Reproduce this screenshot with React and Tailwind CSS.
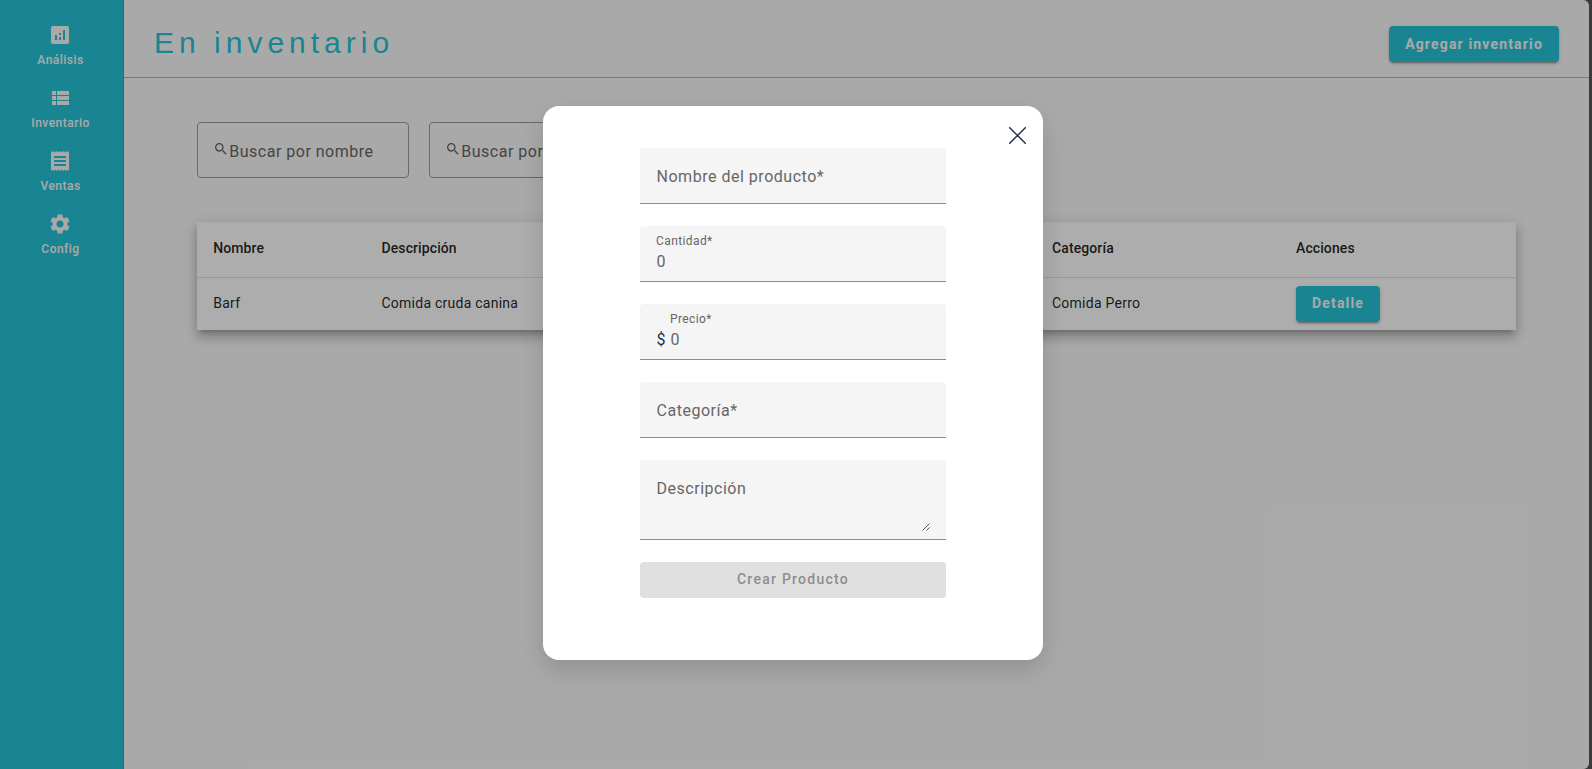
import { MdAnalytics, MdReceipt, MdSettings, MdSearch } from "react-icons/md";

function ViewListIcon({ className }) {
  return (
    <svg className={className} viewBox="0 0 24 24" fill="currentColor">
      <path d="M4 14h4v-4H4v4zm0 5h4v-4H4v4zM4 9h4V5H4v4zm5 5h12v-4H9v4zm0 5h12v-4H9v4zM9 5v4h12V5H9z" />
    </svg>
  );
}

const navItems = [
  { label: "Análisis", Icon: MdAnalytics },
  { label: "Inventario", Icon: ViewListIcon },
  { label: "Ventas", Icon: MdReceipt },
  { label: "Config", Icon: MdSettings },
];

function Sidebar() {
  return (
    <nav className="flex w-[124px] shrink-0 flex-col border-r border-[#20adbd] bg-[#27c5d7] pt-[23px] pr-[4px] text-[#fafafa]">
      {navItems.map(({ label, Icon }) => (
        <a key={label} className="flex h-[63px] flex-col items-center">
          <Icon className="size-6" />
          <span className="mt-[3px] pl-[2px] text-[12px] leading-5 font-medium tracking-[0.48px]">{label}</span>
        </a>
      ))}
    </nav>
  );
}

function RaisedButton({ children }) {
  return (
    <button className="h-9 rounded-[4px] bg-[#27c5d7] px-4 text-[14px] font-bold tracking-[1.16px] text-[#fafafa] shadow-[0_3px_1px_-2px_rgba(0,0,0,0.2),0_2px_2px_0_rgba(0,0,0,0.14),0_1px_5px_0_rgba(0,0,0,0.12)]">
      {children}
    </button>
  );
}

function SearchField({ label }) {
  return (
    <div className="flex h-14 w-[212px] items-center rounded-[4px] border border-[#9a9a9a] pl-[15.25px] text-[#666]">
      <MdSearch className="-mt-[3px] size-4" />
      <span className="mt-[3px] text-[16px] tracking-[0.5px] whitespace-nowrap">{label}</span>
    </div>
  );
}

const columns = "grid grid-cols-[168.25px_670.5px_244px_1fr] items-center pl-[16.25px]";

function InventoryTable() {
  return (
    <div className="bg-white text-[14px] text-[rgba(0,0,0,0.87)] shadow-[0_5px_5px_-3px_rgba(0,0,0,0.2),0_8px_10px_1px_rgba(0,0,0,0.14),0_3px_14px_2px_rgba(0,0,0,0.12)]">
      <div className={`${columns} h-14 border-b border-black/12 pb-[3px] font-medium tracking-[0.1px]`}>
        <span>Nombre</span>
        <span>Descripción</span>
        <span>Categoría</span>
        <span>Acciones</span>
      </div>
      <div className={`${columns} h-[52px] tracking-[0.25px]`}>
        <span className="pb-[2px]">Barf</span>
        <span className="pb-[2px]">Comida cruda canina</span>
        <span className="pb-[2px]">Comida Perro</span>
        <div className="flex">
          <RaisedButton>
            <span className="block pb-[2px]">Detalle</span>
          </RaisedButton>
        </div>
      </div>
    </div>
  );
}

function Field({ label, value, prefix, tall }) {
  return (
    <div
      className={`relative flex w-full rounded-t-[4px] border-b border-[#8c8c8c] bg-[#f5f5f5] px-4 text-[16px] leading-6 tracking-[0.52px] text-[#666] ${tall ? "h-20" : "h-14"}`}
    >
      {value === undefined ? (
        <span className="mt-[17px] ml-[0.5px]">{label}</span>
      ) : (
        <>
          {prefix && <span className="mt-[24px] w-[14px] pl-[0.5px] text-[#27304a]">{prefix}</span>}
          <div className="flex flex-col">
            <span className="mt-[6px] text-[12px] leading-[18px] tracking-[0.4px]">{label}</span>
            <span className="ml-[0.5px]">{value}</span>
          </div>
        </>
      )}
      {tall && (
        <svg className="absolute right-4 bottom-2 size-2" viewBox="0 0 8 8" stroke="#444" strokeWidth="0.9">
          <path d="M0.5 7.5 7.5 0.5M4.5 7.5 7.5 4.5" />
        </svg>
      )}
    </div>
  );
}

function ProductDialog() {
  return (
    <div className="relative h-[554px] w-[500px] rounded-2xl bg-white px-[97px] pt-[42px] shadow-[0_10px_25px_0_rgba(0,0,0,0.14)]">
      <button className="absolute top-[21px] right-[17px]" aria-label="Cerrar">
        <svg className="size-[17px]" viewBox="0 0 17 17" fill="none" stroke="#27304a" strokeWidth="1.5" strokeLinecap="round">
          <path d="M0.7 0.7 16.3 16.3M16.3 0.7 0.7 16.3" />
        </svg>
      </button>
      <form className="flex flex-col gap-[22px]">
        <Field label="Nombre del producto*" />
        <Field label="Cantidad*" value="0" />
        <Field label="Precio*" value="0" prefix="$" />
        <Field label="Categoría*" />
        <Field label="Descripción" tall />
        <button disabled className="h-9 rounded-[4px] bg-[#e0e0e0] pb-[2px] text-[14px] font-medium tracking-[1.25px] text-[#8e8e8e]">
          Crear Producto
        </button>
      </form>
    </div>
  );
}

export default function App() {
  return (
    <div className="relative h-[769px] w-[1592px] overflow-hidden bg-[#3b3b3b] font-['Roboto',sans-serif]">
      <div className="relative flex h-full w-[1589px] overflow-hidden rounded-r-[6px] bg-[#fafafa]">
        <Sidebar />
        <main className="flex-1">
          <header className="flex h-[78px] items-center justify-between border-b border-[#b3b3b3] pr-[30px] pl-[30px]">
            <h1 className="mt-[7px] font-['Liberation_Sans',sans-serif] text-[30px] tracking-[5px] text-[#27c5d7]">En inventario</h1>
            <div className="mt-[11px]">
              <RaisedButton>Agregar inventario</RaisedButton>
            </div>
          </header>
          <section className="flex flex-col gap-11 px-[73px] pt-11">
            <div className="flex gap-5">
              <SearchField label="Buscar por nombre" />
              <SearchField label="Buscar por" />
            </div>
            <InventoryTable />
          </section>
        </main>
        <div className="absolute inset-0 bg-black/32" />
      </div>
      <div className="absolute top-[106px] left-[543px]">
        <ProductDialog />
      </div>
    </div>
  );
}
